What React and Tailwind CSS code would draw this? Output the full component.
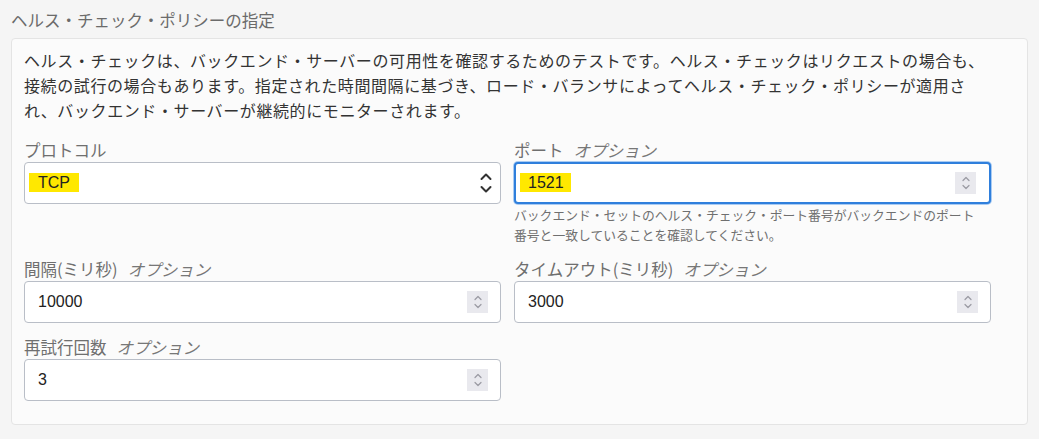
import React from "react"

const jp = { fontFamily: '"Noto Sans CJK JP", "Noto Sans", sans-serif' }
const num = { fontFamily: '"Liberation Sans", Arial, sans-serif' }

function Spinner() {
  return (
    <div className="w-[21px] h-[22px] bg-[#e9e9ee] flex items-center justify-center shrink-0">
      <svg width="10" height="16" viewBox="0 0 10 16" fill="none" stroke="#9a9aa2" strokeWidth="1.2" strokeLinecap="round" strokeLinejoin="round">
        <path d="M2 5.5 L5 2.5 L8 5.5" />
        <path d="M2 10.5 L5 13.5 L8 10.5" />
      </svg>
    </div>
  )
}

function Label({ text, optional }) {
  return (
    <div className="h-[23px] leading-[22px] text-[16.5px] text-[#6f6f6f] whitespace-nowrap" style={jp}>
      {text}
      {optional && <span className="italic text-[#777] ml-[10px]">オプション</span>}
    </div>
  )
}

function NumberField({ label, value, focused, highlight, help }) {
  return (
    <div className="flex flex-col">
      <Label text={label} optional />
      <div
        className={
          focused
            ? "h-[42px] rounded-[4px] bg-white border-2 border-[#2f7fdc] shadow-[0_0_0_1px_#a9cbf2] flex items-center pl-[4px] pr-[13px]"
            : "h-[42px] rounded-[4px] bg-white border border-[#b9bec7] flex items-center pl-[13px] pr-[12px]"
        }
      >
        <div className="flex-1 text-[16px] text-[#222]" style={num}>
          {highlight ? (
            <span className="bg-[#ffe800] pl-[8px] pr-[7px] py-[1px]">{value}</span>
          ) : (
            value
          )}
        </div>
        <Spinner />
      </div>
      {help && (
        <p className="text-[12.8px] leading-[20px] text-[#6f6f6f] pr-[8px] mt-[1px]" style={jp}>
          {help}
        </p>
      )}
    </div>
  )
}

export default function App() {
  return (
    <div className="min-h-[439px] bg-[#f5f5f5] px-[11px] pt-[8px] pb-[13px]">
      <div className="h-[24px] leading-[24px] text-[16.5px] text-[#6b6b6b] mb-[6px]" style={jp}>
        ヘルス・チェック・ポリシーの指定
      </div>
      <div className="border border-[#e4e4e4] rounded-[4px] bg-[#fbfbfb] pl-[12px] pt-[9px] pb-[23px]">
        <div className="w-[967px]">
          <p className="text-[16px] leading-[25px] tracking-[0.6px] text-[#333] mb-[16px] whitespace-nowrap" style={jp}>
            ヘルス・チェックは、バックエンド・サーバーの可用性を確認するためのテストです。ヘルス・チェックはリクエストの場合も、
            <br />
            接続の試行の場合もあります。指定された時間間隔に基づき、ロード・バランサによってヘルス・チェック・ポリシーが適用さ
            <br />
            れ、バックエンド・サーバーが継続的にモニターされます。
          </p>
          <div className="grid grid-cols-2 gap-x-[13px] gap-y-[13px] items-start">
            <div className="flex flex-col">
              <Label text="プロトコル" />
              <div className="h-[42px] rounded-[4px] bg-white border border-[#b9bec7] flex items-center pl-[4px] pr-[7px]">
                <div className="flex-1 text-[16px] text-[#222]" style={num}>
                  <span className="bg-[#ffe800] px-[9px] py-[1px]">TCP</span>
                </div>
                <svg width="14" height="22" viewBox="0 0 14 22" fill="none" stroke="#333" strokeWidth="2" strokeLinecap="round" strokeLinejoin="round">
                  <path d="M2.5 7 L7 2.5 L11.5 7" />
                  <path d="M2.5 15 L7 19.5 L11.5 15" />
                </svg>
              </div>
            </div>
            <NumberField
              label="ポート"
              value="1521"
              focused
              highlight
              help="バックエンド・セットのヘルス・チェック・ポート番号がバックエンドのポート番号と一致していることを確認してください。"
            />
            <NumberField label="間隔(ミリ秒)" value="10000" />
            <NumberField label="タイムアウト(ミリ秒)" value="3000" />
            <NumberField label="再試行回数" value="3" />
          </div>
        </div>
      </div>
    </div>
  )
}
